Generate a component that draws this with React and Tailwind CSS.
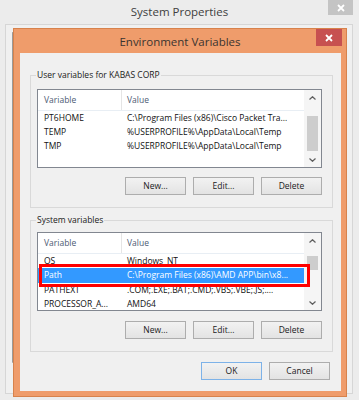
import React from "react";

function Chevron({ up }) {
  return (
    <svg width="7" height="4" viewBox="0 0 7 4">
      <polyline
        points={up ? "0.5,3.5 3.5,0.7 6.5,3.5" : "0.5,0.5 3.5,3.3 6.5,0.5"}
        fill="none"
        stroke="#5f5f5f"
        strokeWidth="1.2"
      />
    </svg>
  );
}

function Button({ children, primary }) {
  return (
    <div
      className={`flex h-[18px] w-[61px] items-center justify-center border bg-linear-to-b from-[#f2f2f2] to-[#e3e3e3] text-[#1a1a1a] ${
        primary ? "border-[#7db2e8]" : "border-[#adadad]"
      }`}
    >
      {children}
    </div>
  );
}

function ListBox({ rows, thumbClass, mark }) {
  return (
    <div className="relative flex h-[79px] w-[285px] border border-[#828790] bg-white">
      <div className="flex min-w-0 flex-1 flex-col overflow-hidden">
        <div className="flex h-[21px] shrink-0 border-b border-[#e8eef4] text-[#4c5b74]">
          <div className="flex w-[84px] shrink-0 items-center border-r border-[#e5e5e5] pl-[6px]">
            Variable
          </div>
          <div className="flex items-center pl-[5px]">Value</div>
        </div>
        {rows.map((r, i) => (
          <div
            key={i}
            className={`flex shrink-0 items-center ${
              r.sel ? "h-[15px] bg-[#3399ff] text-white" : "h-[14px] text-[#111]"
            }`}
          >
            <div className="w-[84px] shrink-0 overflow-hidden whitespace-nowrap pl-[6px]">
              {r.name}
            </div>
            <div className="overflow-hidden whitespace-nowrap pl-[5px]">{r.value}</div>
          </div>
        ))}
      </div>
      <div className="flex w-[17px] shrink-0 flex-col bg-[#f5f5f5]">
        <div className="flex h-[15px] shrink-0 items-center justify-center">
          <Chevron up />
        </div>
        <div className="flex flex-1 flex-col px-[3px]">
          <div className={`bg-[#cdcdcd] ${thumbClass}`} />
        </div>
        <div className="flex h-[15px] shrink-0 items-center justify-center">
          <Chevron />
        </div>
      </div>
      {mark && (
        <div className="absolute left-[1px] top-[31px] h-[23px] w-[271px] border-[3px] border-[#ff0000]" />
      )}
    </div>
  );
}

function Group({ label, children, className }) {
  return (
    <div className={`flex flex-col border border-[#d9d9d9] ${className}`}>
      <div className="-mt-[8px] flex h-[14px] pl-[5px]">
        <span className="bg-[#f0f0f0] px-[1px] leading-[14px] text-[#1a1a1a]">{label}</span>
      </div>
      {children}
    </div>
  );
}

export default function App() {
  const userRows = [
    { name: "PT6HOME", value: "C:\\Program Files (x86)\\Cisco Packet Tra..." },
    { name: "TEMP", value: "%USERPROFILE%\\AppData\\Local\\Temp" },
    { name: "TMP", value: "%USERPROFILE%\\AppData\\Local\\Temp" },
  ];
  const sysRows = [
    { name: "OS", value: "Windows_NT" },
    { name: "Path", value: "C:\\Program Files (x86)\\AMD APP\\bin\\x8...", sel: true },
    { name: "PATHEXT", value: ".COM;.EXE;.BAT;.CMD;.VBS;.VBE;.JS;...." },
    { name: "PROCESSOR_A...", value: "AMD64" },
  ];

  return (
    <div className="relative h-[400px] w-[359px] overflow-hidden bg-[#ececec] font-['Open_Sans',sans-serif] text-[8.5px]">
      {/* outer window title bar */}
      <div className="grid h-[24px] grid-cols-[1fr_auto_1fr]">
        <div />
        <div className="flex items-center text-[11.5px] text-[#404040]">System Properties</div>
        <div className="flex justify-end pr-[6px]">
          <div className="flex h-[15px] w-[25px] items-center justify-center bg-[#c4c4c4]">
            <svg width="8" height="8" viewBox="0 0 8 8">
              <path d="M1 1L7 7M7 1L1 7" stroke="#fff" strokeWidth="1.8" />
            </svg>
          </div>
        </div>
      </div>
      {/* outer window frame */}
      <div className="ml-[5px] h-[370px] w-[348px] border border-[#d6d6d6] bg-[#f0f0f0] pl-[6px] pt-[7px]">
        <div className="h-[331px] w-[334px] border border-[#cfcfcf] border-l-[#9a9a9a] border-t-[#b5b5b5] bg-[#f0f0f0]" />
      </div>

      {/* Environment Variables dialog */}
      <div className="absolute left-[13px] top-[28px] flex h-[369px] w-[334px] flex-col border border-[#d7824c] bg-[#ef9c6b]">
        <div className="grid h-[24px] shrink-0 grid-cols-[1fr_auto_1fr]">
          <div />
          <div className="flex items-center pt-[1px] text-[11.5px] text-[#3a3430]">
            Environment Variables
          </div>
          <div className="flex justify-end pr-[4px]">
            <div className="flex h-[17px] w-[26px] items-center justify-center bg-[#c75050]">
              <svg width="8" height="8" viewBox="0 0 8 8">
                <path d="M1 1L7 7M7 1L1 7" stroke="#fff" strokeWidth="1.8" />
              </svg>
            </div>
          </div>
        </div>
        <div className="ml-[6px] flex h-[338px] w-[321px] flex-col bg-[#f0f0f0] pl-[10px] pt-[22px]">
          <Group label="User variables for KABAS CORP" className="h-[133px] w-[303px]">
            <div className="ml-[6px] mt-[7px]">
              <ListBox rows={userRows} thumbClass="mt-[11px] h-[35px]" />
            </div>
            <div className="mt-[9px] flex justify-end gap-[7px] pr-[10px]">
              <Button>New...</Button>
              <Button>Edit...</Button>
              <Button>Delete</Button>
            </div>
          </Group>
          <Group label="System variables" className="mt-[12px] h-[132px] w-[303px]">
            <div className="ml-[6px] mt-[5px]">
              <ListBox rows={sysRows} thumbClass="mt-[8px] h-[14px]" mark />
            </div>
            <div className="mt-[10px] flex justify-end gap-[7px] pr-[10px]">
              <Button>New...</Button>
              <Button>Edit...</Button>
              <Button>Delete</Button>
            </div>
          </Group>
          <div className="mt-[10px] flex justify-end gap-[7px] pr-[11px]">
            <Button primary>OK</Button>
            <Button>Cancel</Button>
          </div>
        </div>
      </div>
    </div>
  );
}
